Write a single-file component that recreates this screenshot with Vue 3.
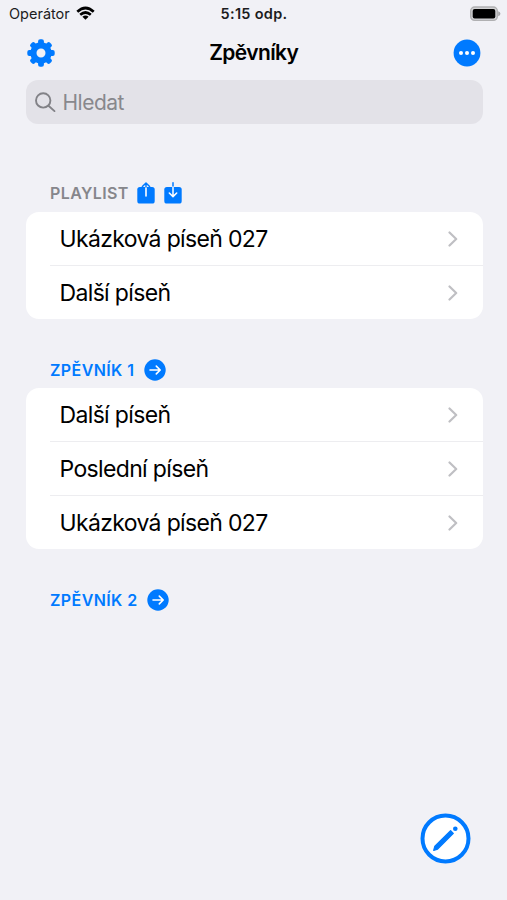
<script setup>
const playlist = ['Ukázková píseň 027', 'Další píseň']
const songbooks = [
  { title: 'Zpěvník 1', songs: ['Další píseň', 'Poslední píseň', 'Ukázková píseň 027'] },
  { title: 'Zpěvník 2', songs: [] },
]
</script>

<template>
  <div class="screen">
    <div class="status">
      <div class="carrier">
        <span>Operátor</span>
        <svg width="19" height="14" viewBox="0 0 19 14">
          <path d="M9.5 13.8 6.4 10.7Q9.5 8.3 12.6 10.7Z" fill="#000" />
          <path d="M4.2 8.7Q9.5 4.3 14.8 8.7M1.3 5.8Q9.5 -1.8 17.7 5.8" fill="none" stroke="#000" stroke-width="2.7" />
        </svg>
      </div>
      <span class="clock">5:15 odp.</span>
      <svg class="battery" width="32" height="16" viewBox="0 0 32 16">
        <rect x="1.7" y="1" width="26.6" height="13.4" rx="4" fill="#d2d2d4" stroke="#b0b0b2" stroke-width="1.4" />
        <rect x="3.7" y="3" width="22.6" height="9.4" rx="2" fill="#000" />
        <path d="M29.2 5.2Q31.4 6 31.4 7.7T29.2 10.2Z" fill="#a5a5a7" />
      </svg>
    </div>

    <header class="nav">
      <svg width="28" height="28" viewBox="-14 -14 28 28">
        <g fill="#007aff">
          <rect v-for="n in 8" :key="n" x="-2.9" y="-13.7" width="5.8" height="8" rx="2" :transform="`rotate(${n * 45})`" />
        </g>
        <circle r="7.6" fill="none" stroke="#007aff" stroke-width="6.2" />
      </svg>
      <h1>Zpěvníky</h1>
      <svg width="28" height="28" viewBox="-14 -14 28 28">
        <circle r="13.4" fill="#007aff" />
        <g fill="#fff"><circle cx="-6" r="2" /><circle r="2" /><circle cx="6" r="2" /></g>
      </svg>
    </header>

    <div class="search">
      <svg width="22" height="22" viewBox="0 0 22 22" fill="none" stroke="#828287" stroke-width="1.9" stroke-linecap="round">
        <circle cx="8.2" cy="9.4" r="7.2" /><path d="M13.5 14.7l6 5.4" />
      </svg>
      <span>Hledat</span>
    </div>

    <section class="group">
      <div class="heading muted">
        <span>Playlist</span>
        <svg class="share" width="18" height="22" viewBox="0 0 18 22">
          <rect x="0.3" y="5" width="17.4" height="16.6" rx="2.6" fill="#007aff" />
          <path d="M9 14V5" stroke="#fff" stroke-width="1.6" stroke-linecap="round" />
          <path d="M9 5V1.3M5.4 4.5 9 1l3.6 3.5" fill="none" stroke="#007aff" stroke-width="1.5" stroke-linecap="round" stroke-linejoin="round" />
        </svg>
        <svg class="save" width="18" height="22" viewBox="0 0 18 22">
          <rect x="0.3" y="5" width="17.4" height="16.6" rx="2.6" fill="#007aff" />
          <path d="M9 5V.8" stroke="#007aff" stroke-width="1.5" stroke-linecap="round" />
          <path d="M9 5v9.5M5.3 11 9 14.6l3.7-3.6" fill="none" stroke="#fff" stroke-width="1.5" stroke-linecap="round" stroke-linejoin="round" />
        </svg>
      </div>
      <ul class="card">
        <li v-for="song in playlist" :key="song">
          <span>{{ song }}</span>
          <svg width="10" height="16" viewBox="0 0 10 16"><path d="M1.5 1.5 8.2 8l-6.7 6.5" /></svg>
        </li>
      </ul>
    </section>

    <section v-for="book in songbooks" :key="book.title" class="group">
      <div class="heading">
        <span>{{ book.title }}</span>
        <svg class="go" width="22" height="22" viewBox="-11 -11 22 22">
          <circle r="10.7" fill="#007aff" />
          <path d="M-5 0H5M1.3-3.9 5.2 0 1.3 3.9" fill="none" stroke="#fff" stroke-width="1.6" stroke-linecap="round" stroke-linejoin="round" />
        </svg>
      </div>
      <ul v-if="book.songs.length" class="card">
        <li v-for="song in book.songs" :key="song">
          <span>{{ song }}</span>
          <svg width="10" height="16" viewBox="0 0 10 16"><path d="M1.5 1.5 8.2 8l-6.7 6.5" /></svg>
        </li>
      </ul>
    </section>

    <svg class="compose" width="52" height="52" viewBox="-26 -26 52 52">
      <g transform="translate(-.5 -.5)">
        <circle r="23" fill="#fff" stroke="#007aff" stroke-width="4" />
        <path d="M-11.8 11.9-10.6 7.8 5.1-7.8 7.8-5.1-7.9 10.6Z" fill="#007aff" stroke="#007aff" stroke-width="1.3" stroke-linejoin="round" />
        <circle cx="9.8" cy="-9.8" r="2.3" fill="#007aff" />
      </g>
    </svg>
  </div>
</template>

<style>
body { background: #f1f1f6; }
</style>

<style scoped>
.screen {
  width: 507px;
  height: 900px;
  box-sizing: border-box;
  display: flex;
  flex-direction: column;
  overflow: hidden;
  background: #f1f1f6;
  color: #000;
  font-family: Inter, "Liberation Sans", sans-serif;
}
.status {
  height: 27px;
  flex: none;
  display: grid;
  grid-template-columns: 1fr auto 1fr;
  align-items: center;
  padding: 0 6px 0 9px;
  font-size: 14.5px;
  color: #1c1c1e;
}
.carrier { display: flex; align-items: center; gap: 6px; }
.carrier svg { margin-bottom: 1px; }
.clock { font-weight: 600; letter-spacing: 0.3px; margin-right: 2px; }
.battery { justify-self: end; }
.nav {
  height: 53px;
  flex: none;
  box-sizing: border-box;
  display: flex;
  justify-content: space-between;
  align-items: center;
  padding: 0 26.5px 2px 27px;
}
h1 { margin: 0; font-size: 21px; line-height: 28px; font-weight: 600; letter-spacing: -0.6px; }
.search {
  height: 44px;
  flex: none;
  box-sizing: border-box;
  margin: 0 24.5px 0 25.5px;
  padding-left: 9px;
  border-radius: 12px;
  background: #e3e2e8;
  display: flex;
  align-items: center;
  gap: 6px;
  color: #88888d;
  font-size: 21px;
  letter-spacing: -0.5px;
}
.group { padding: 0 24.5px 0 25.5px; }
.search + .group { margin-top: 50px; }
.group + .group { margin-top: 32px; }
.heading {
  height: 38px;
  display: flex;
  align-items: center;
  padding-left: 24.5px;
  color: #007aff;
  font-size: 16px;
  font-weight: 600;
  letter-spacing: 0.4px;
  text-transform: uppercase;
}
.group + .group .heading { height: 37px; }
.muted { color: #86868b; }
.share { margin-left: 8.5px; }
.save { margin-left: 9px; }
.go { margin-left: 9.5px; }
.card {
  list-style: none;
  margin: 0;
  padding: 0;
  background: #fff;
  border-radius: 13px;
}
li {
  height: 53.7px;
  box-sizing: border-box;
  display: flex;
  align-items: center;
  justify-content: space-between;
  margin-left: 24px;
  padding: 0 25px 0 10px;
  font-size: 23px;
  letter-spacing: -0.65px;
}
li:not(:last-child) { border-bottom: 1.5px solid #ededf0; padding-top: 1px; }
li path { fill: none; stroke: #bfbfc3; stroke-width: 2.2; stroke-linecap: round; stroke-linejoin: round; }
.compose { position: absolute; left: 420px; top: 813px; }
</style>
